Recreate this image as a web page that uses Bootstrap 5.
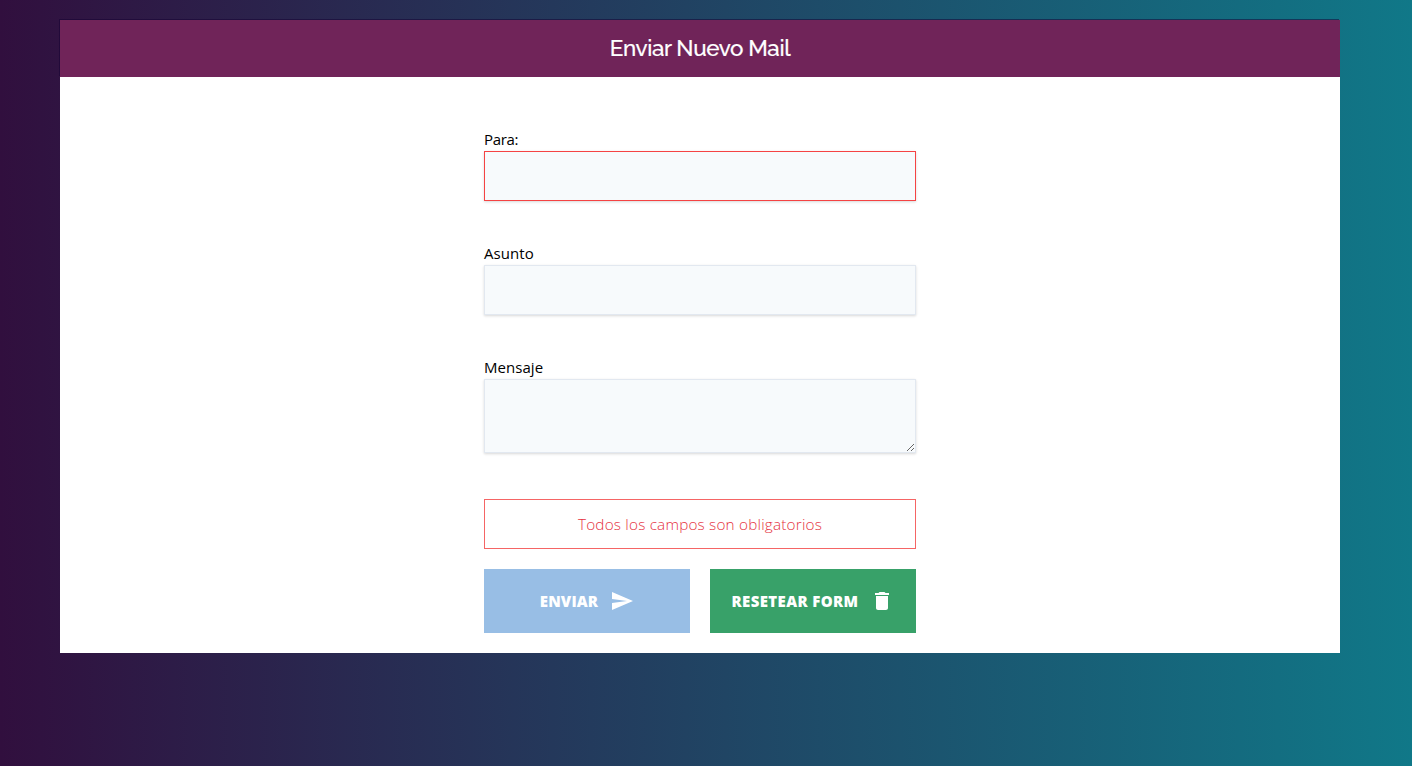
<!DOCTYPE html>
<html lang="es">
<head>
<meta charset="utf-8">
<meta name="viewport" content="width=device-width, initial-scale=1">
<title>Enviar Nuevo Mail</title>
<link rel="stylesheet" href="https://cdn.jsdelivr.net/npm/bootstrap@5.3.0/dist/css/bootstrap.min.css">
<style>
body{font:16px/24px "Open Sans","Noto Sans",sans-serif;color:#000;background:linear-gradient(to right,#310f3e,#107888) fixed;}
.mail-panel{margin:20px 72px 0 60px;height:633px}
.mail-head{height:57px;background:#702459;box-shadow:-1px -1px 0 rgba(20,0,50,.5)}
.mail-head h1{font:500 22.4px/57px Raleway,Lato,sans-serif;letter-spacing:-.4px;-webkit-text-stroke:.2px #fff}
.mail-form{width:432px;padding-top:50px}
.form-label{font-size:15px;font-weight:400;letter-spacing:.05px;line-height:24px;height:24px;display:block}
.lb-para{letter-spacing:-.3px}
.form-control{height:50px;background:#f7fafc;border:1px solid #e2e8f0;box-shadow:0 1px 3px rgba(0,0,0,.1),0 1px 2px rgba(0,0,0,.06);margin-bottom:40px}
.form-control:focus{background:#f7fafc}
.form-control.is-missing{border-color:#f54343}
textarea.form-control{height:74px;min-height:74px;resize:vertical;margin-bottom:46px}
.notice{height:50px;border:1px solid #f56565;color:#e52f3d;margin-bottom:20px;font-size:15.3px;font-weight:300;letter-spacing:.2px}
.act{width:206px;height:64px;color:#fff;font-weight:800;font-size:15px;letter-spacing:.15px;border:0;border-radius:0}
.act span{padding-top:1px}
.act-send,.act-send:disabled{background:#98bee5;color:#fff;opacity:1}
.act-reset,.act-reset:hover{background:#38a169;color:#fff;letter-spacing:.38px}
</style>
</head>
<body>
<main class="mail-panel bg-white">
  <header class="mail-head text-white text-center"><h1 class="m-0"><span>Enviar Nuevo Mail</span></h1></header>
  <form class="mail-form mx-auto">
    <label class="form-label lb-para m-0" for="para"><span>Para:</span></label>
    <input id="para" type="email" class="form-control rounded-0 is-missing">
    <label class="form-label m-0" for="asunto"><span>Asunto</span></label>
    <input id="asunto" type="text" class="form-control rounded-0">
    <label class="form-label m-0" for="mensaje"><span>Mensaje</span></label>
    <textarea id="mensaje" class="form-control rounded-0"></textarea>
    <div class="notice d-flex align-items-center justify-content-center"><span>Todos los campos son obligatorios</span></div>
    <div class="d-flex justify-content-between">
      <button type="submit" class="btn act act-send d-flex align-items-center justify-content-center p-0" disabled>
        <span>ENVIAR</span>
        <svg class="ms-2 ps-1" width="28" height="24" viewBox="0 0 24 24" fill="currentColor"><path d="M2.01 21 23 12 2.01 3 2 10l15 2-15 2z"/></svg>
      </button>
      <button type="reset" class="btn act act-reset d-flex align-items-center justify-content-center p-0">
        <span>RESETEAR FORM</span>
        <svg class="ms-2 ps-1" width="28" height="24" viewBox="0 0 24 24" fill="currentColor"><path d="M6 19c0 1.100.9 2 2 2h8c1.100 0 2-.9 2-2V7H6zM19 4h-3.500l-1-1h-5l-1 1H5v2h14z"/></svg>
      </button>
    </div>
  </form>
</main>
<script src="https://cdn.jsdelivr.net/npm/bootstrap@5.3.0/dist/js/bootstrap.bundle.min.js"></script>
</body>
</html>
